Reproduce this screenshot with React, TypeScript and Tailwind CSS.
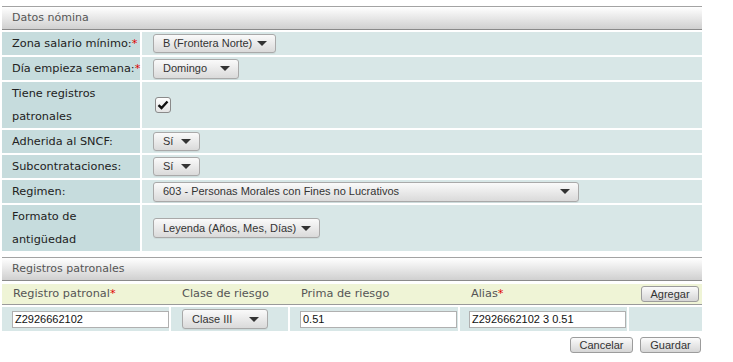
import React from 'react';

const label = "font-['DejaVu_Sans',sans-serif] text-[11.3px] text-[#222]";
const arial = "font-['Liberation_Sans',Arial,sans-serif]";

function SectionHeader({ title }: { title: string }) {
    return (
        <div className="h-[24px] border-t border-b border-t-[#a3a3a3] border-b-[#8a8a8a] bg-linear-to-b from-white to-[#d0d0d0] pl-[10px] flex items-center font-['DejaVu_Sans',sans-serif] text-[11px] text-[#555]">
            {title}
        </div>
    );
}

function Arrow() {
    return (
        <svg width="10" height="5" viewBox="0 0 10 5" className="shrink-0">
            <polygon points="0,0 10,0 5,5" fill="#333" />
        </svg>
    );
}

function Select({ value, width, height = 'h-[19px]' }: { value: string; width: string; height?: string }) {
    return (
        <div
            className={`${width} ${height} ${arial} flex items-center justify-between pl-[9px] pr-[8px] rounded-[3px] border border-[#a9a9a9] bg-linear-to-b from-[#fafafa] to-[#dadada] text-[11px] text-[#333] shadow-[0_1px_0_rgba(0,0,0,0.05)]`}
        >
            <span className="whitespace-nowrap">{value}</span>
            <Arrow />
        </div>
    );
}

function Button({ text, width }: { text: string; width: string }) {
    return (
        <button
            className={`${width} h-[16px] ${arial} flex items-center justify-center rounded-[3px] border border-[#9c9c9c] bg-linear-to-b from-[#fbfbfb] to-[#d6d6d6] text-[11px] text-[#333] leading-none`}
        >
            {text}
        </button>
    );
}

function Req() {
    return <span className="text-[#e00000]">*</span>;
}

function Row({ children, value, tall = false }: { children: React.ReactNode; value: React.ReactNode; tall?: boolean }) {
    const h = tall ? 'h-[46px]' : 'h-[23px]';
    return (
        <>
            <div className={`${h} bg-[#c6dcdd] pl-[10px] leading-[23px] whitespace-nowrap ${label}`}>{children}</div>
            <div className={`${h} bg-[#d8e7e7] pl-[11px] flex items-center`}>{value}</div>
        </>
    );
}

function TextInput({ value, width }: { value: string; width: string }) {
    return (
        <div className={`${width} h-[17px] ${arial} flex items-center border border-[#b0b0b0] bg-white px-[2px] text-[11px] text-[#111]`}>
            {value}
        </div>
    );
}

export default function App() {
    return (
        <div className="w-[733px] h-[362px] bg-white pl-[2px] pt-[6px]">
            <div className="w-[700px]">
                {/* Datos nómina */}
                <SectionHeader title="Datos nómina" />
                <div className="grid grid-cols-[138px_560px] gap-[2px] mt-[2px]">
                    <Row value={<Select value="B (Frontera Norte)" width="w-[123px]" />}>
                        Zona salario mínimo:<Req />
                    </Row>
                    <Row value={<Select value="Domingo" width="w-[86px]" height="h-[20px]" />}>
                        Día empieza semana:<Req />
                    </Row>
                    <Row
                        tall
                        value={
                            <div className="ml-[2px] w-[16px] h-[16px] rounded-[3px] border border-[#8a8a8a] bg-linear-to-b from-white to-[#e4e4e4] flex items-center justify-center">
                                <svg width="12" height="10" viewBox="0 0 12 10">
                                    <path d="M1.5 5.2 L4.5 8 L10.5 1.5" stroke="#111" strokeWidth="2.4" fill="none" />
                                </svg>
                            </div>
                        }
                    >
                        Tiene registros
                        <br />
                        patronales
                    </Row>
                    <Row value={<Select value="Sí" width="w-[47px]" />}>Adherida al SNCF:</Row>
                    <Row value={<Select value="Sí" width="w-[47px]" />}>Subcontrataciones:</Row>
                    <Row value={<Select value="603 - Personas Morales con Fines no Lucrativos" width="w-[426px]" height="h-[20px]" />}>
                        Regimen:
                    </Row>
                    <Row tall value={<Select value="Leyenda (Años, Mes, Días)" width="w-[167px]" height="h-[20px]" />}>
                        Formato de
                        <br />
                        antigüedad
                    </Row>
                </div>

                {/* Registros patronales */}
                <div className="mt-[6px]">
                    <SectionHeader title="Registros patronales" />
                </div>
                <div className="mt-[3px] h-[21px] bg-[#eff4d6] border-b border-[#9a9a9a] grid grid-cols-[169px_119px_170px_169px_73px] items-center font-['DejaVu_Sans',sans-serif] text-[11.3px] text-[#555]">
                    <div className="pl-[11px]">
                        Registro patronal<Req />
                    </div>
                    <div className="pl-[11px]">Clase de riesgo</div>
                    <div className="pl-[11px]">Prima de riesgo</div>
                    <div className="pl-[11px]">
                        Alias<Req />
                    </div>
                    <div className="flex justify-end pr-[3px]">
                        <Button text="Agregar" width="w-[58px]" />
                    </div>
                </div>
                <div className="mt-[2px] grid grid-cols-[167px_117px_168px_167px_73px] gap-[2px] h-[24px]">
                    <div className="bg-[#d8e7e7] pl-[10px] flex items-center">
                        <TextInput value="Z2926662102" width="w-[157px]" />
                    </div>
                    <div className="bg-[#d8e7e7] pl-[11px] flex items-center">
                        <Select value="Clase III" width="w-[86px]" height="h-[20px]" />
                    </div>
                    <div className="bg-[#d8e7e7] pl-[10px] flex items-center">
                        <TextInput value="0.51" width="w-[157px]" />
                    </div>
                    <div className="bg-[#d8e7e7] pl-[9px] flex items-center">
                        <TextInput value="Z2926662102 3 0.51" width="w-[157px]" />
                    </div>
                    <div className="bg-[#d8e7e7]" />
                </div>

                <div className="mt-[6px] flex justify-end gap-[7px] pr-[1px]">
                    <Button text="Cancelar" width="w-[63px]" />
                    <Button text="Guardar" width="w-[61px]" />
                </div>
            </div>
        </div>
    );
}
